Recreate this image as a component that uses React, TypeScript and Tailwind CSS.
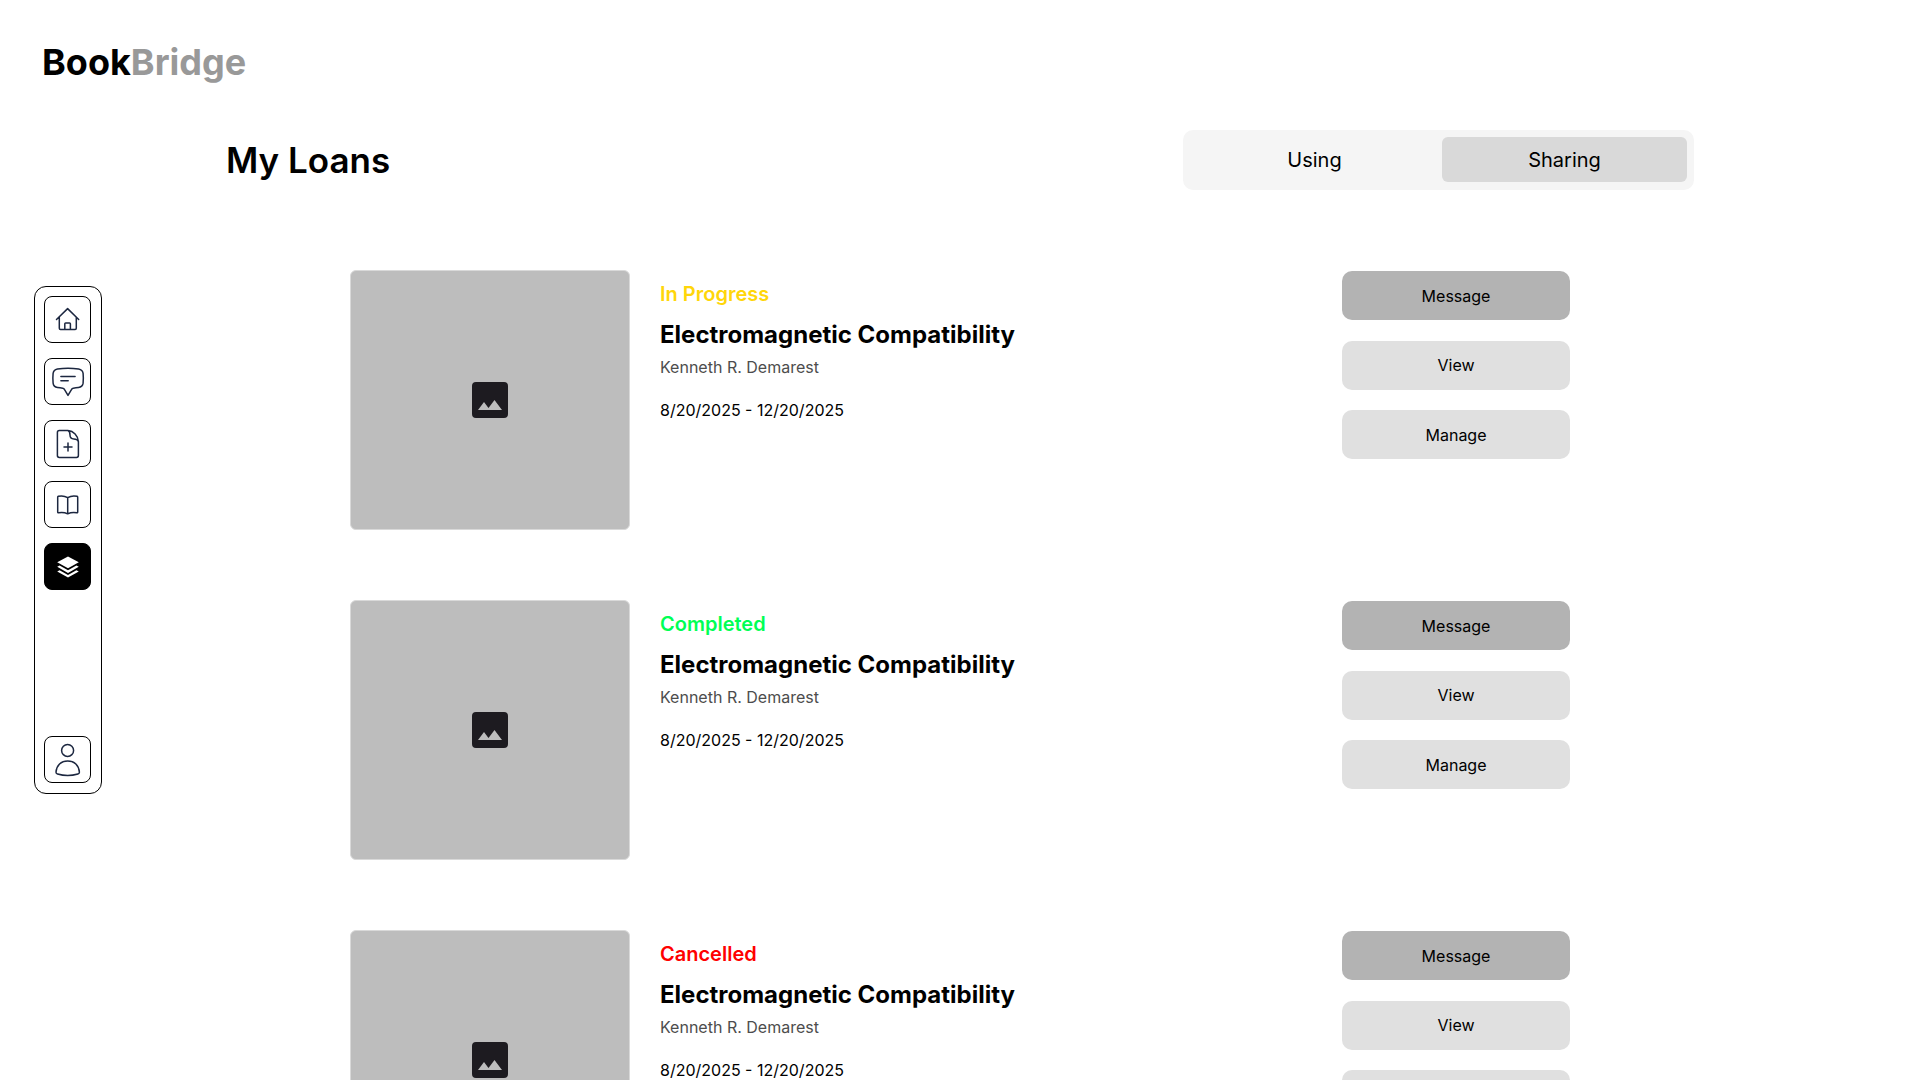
import type { ReactNode } from "react";
import clsx from "clsx";

type Loan = {
  id: number;
  status: "In Progress" | "Completed" | "Cancelled";
  title: string;
  author: string;
  period: string;
};

const loans: Loan[] = [
  { id: 1, status: "In Progress", title: "Electromagnetic Compatibility", author: "Kenneth R. Demarest", period: "8/20/2025 - 12/20/2025" },
  { id: 2, status: "Completed", title: "Electromagnetic Compatibility", author: "Kenneth R. Demarest", period: "8/20/2025 - 12/20/2025" },
  { id: 3, status: "Cancelled", title: "Electromagnetic Compatibility", author: "Kenneth R. Demarest", period: "8/20/2025 - 12/20/2025" },
];

const statusColor: Record<Loan["status"], string> = {
  "In Progress": "text-[#ffd60a]",
  Completed: "text-[#00ff55]",
  Cancelled: "text-[#ff0000]",
};

function Glyph({ children }: { children: ReactNode }) {
  return (
    <svg
      viewBox="1 1 45 45"
      className="size-full"
      fill="none"
      stroke="currentColor"
      strokeWidth="1.5"
      strokeLinecap="round"
      strokeLinejoin="round"
      aria-hidden="true"
    >
      {children}
    </svg>
  );
}

const navItems = [
  {
    label: "Home",
    icon: (
      <Glyph>
        <path d="M12.5 23.5 23.6 12.6 34.7 23.5M15.3 21v11.2q0 1.2 1.2 1.2h14.6q1.2 0 1.2-1.2V21M20.8 33.2v-5.4q0-.9.9-.9h3.8q.9 0 .9.9v5.4" />
      </Glyph>
    ),
  },
  {
    label: "Messages",
    icon: (
      <Glyph>
        <path d="M13.4 11q10.6-1.7 21.2 0c2.6.5 4.2 2 4.5 4.4q.5 5 0 9.8c-.4 2.6-2 4-4.6 4.4q-2.6.4-5.2.6-1.2.2-1.7 1.2L24 37.4l-3.6-6q-.5-1-1.700-1.200-2.600-.2-5.200-.6C10.900 29.200 9.400 27.800 9.100 25.200q-.5-4.800 0-9.800C9.400 13 11 11.500 13.400 11ZM16.900 18.400h14.200M16.900 22.800h7.300" />
      </Glyph>
    ),
  },
  {
    label: "Add book",
    icon: (
      <Glyph>
        <path d="M24 10.500h-8.700q-1.900 0-1.900 1.900v23.200q0 1.900 1.900 1.900h17.200q1.900 0 1.900-1.900V21.500C34 15.500 29.500 11 24 10.500ZM24 10.500c1.600.8 2 2.500 2 4.500 0 2.900 1 3.900 3.800 3.900 2.400 0 4 .8 4.600 2.600M24 23v8M20 27h8" />
      </Glyph>
    ),
  },
  {
    label: "Library",
    icon: (
      <Glyph>
        <path d="M23.700 16.700q-4-2.500-9.300-1.400-.7.200-.7.900V31q0 .9.900.7 5.100-.9 9.100 1.100 4-2 9.100-1.100.9.200.9-.7V16.200q0-.7-.7-.9-5.300-1.100-9.300 1.400ZM23.700 16.700v16" />
      </Glyph>
    ),
  },
  {
    label: "My loans",
    active: true,
    icon: (
      <Glyph>
        <g fill="currentColor" stroke="none">
          <path d="M24 13.600 34.800 19.300 24 25.200 13.200 19.300Z" />
          <path d="M13.200 23.800 15.600 22.600 24 27.200 32.400 22.600 34.800 23.800 24 29.900Z" />
          <path d="M13.200 28.500 15.600 27.300 24 31.900 32.400 27.300 34.800 28.500 24 34.600Z" />
        </g>
      </Glyph>
    ),
  },
];

function NavButton({ label, active, children }: { label: string; active?: boolean; children: ReactNode }) {
  return (
    <button
      type="button"
      aria-label={label}
      aria-current={active ? "page" : undefined}
      className={clsx(
        "size-[47px] rounded-lg border border-black",
        active ? "bg-black text-white" : "bg-white text-[#1c2740]",
      )}
    >
      {children}
    </button>
  );
}

function Sidebar() {
  return (
    <nav aria-label="Main" className="mt-[156px] ml-[34px] flex h-[508px] shrink-0 flex-col justify-between rounded-xl border border-black pt-[9px] pr-[10px] pb-[10px] pl-[9px]">
      <div className="flex h-[294px] flex-col justify-between">
        {navItems.map((item) => (
          <NavButton key={item.label} label={item.label} active={item.active}>
            {item.icon}
          </NavButton>
        ))}
      </div>
      <NavButton label="Profile">
        <Glyph>
          <circle cx="23.6" cy="14.4" r="6" />
          <path d="M12 36.200C12.500 29.300 17 25 23.700 25s11.200 4.300 11.700 11.200c0 1-.5 1.500-1.500 1.800q-10.200 3-20.400 0c-1-.3-1.500-.8-1.500-1.800Z" />
        </Glyph>
      </NavButton>
    </nav>
  );
}

function LoanCard({ loan }: { loan: Loan }) {
  return (
    <li className="flex items-start">
      <div className="flex h-[260px] w-[280px] shrink-0 items-center justify-center rounded-md border border-[#d9d9d9] bg-[#bdbdbd]">
        <svg viewBox="0 0 24 24" className="size-12" fill="#1d1b20" role="img" aria-label="Book cover">
          <path
            fillRule="evenodd"
            d="M5 3h14a2 2 0 0 1 2 2v14a2 2 0 0 1-2 2H5a2 2 0 0 1-2-2V5a2 2 0 0 1 2-2Zm1 14h12l-3.750-5-3 4L9 13l-3 4Z"
          />
        </svg>
      </div>
      <div className="ml-[30px] min-w-0 flex-1 pt-3">
        <p className={clsx("text-xl leading-6 font-semibold", statusColor[loan.status])}>{loan.status}</p>
        <h2 className="mt-[15px] text-2xl leading-7 font-bold">{loan.title}</h2>
        <p className="mt-[6px] text-base leading-6 text-[#4d4d4d]">{loan.author}</p>
        <p className="mt-[19px] text-base leading-6">{loan.period}</p>
      </div>
      <div className="mt-px flex h-[188px] w-[228px] shrink-0 flex-col justify-between">
        <button type="button" className="h-[49px] rounded-[10px] bg-[#b3b3b3]">Message</button>
        <button type="button" className="h-[49px] rounded-[10px] bg-[#e0e0e0]">View</button>
        <button type="button" className="h-[49px] rounded-[10px] bg-[#e0e0e0]">Manage</button>
      </div>
    </li>
  );
}

export default function App() {
  return (
    <div className="flex h-screen flex-col overflow-hidden bg-white font-['Inter',sans-serif] text-black">
      <header className="px-[42px] pt-10 pb-[46px]">
        <a href="#" className="text-4xl leading-[44px] font-bold">
          Book<span className="text-[#999999]">Bridge</span>
        </a>
      </header>
      <div className="flex min-h-0 flex-1 items-start">
        <Sidebar />
        <main className="h-full min-w-0 flex-1 overflow-y-auto pr-[226px] pl-[124px] [scrollbar-width:none]">
          <div className="flex items-center justify-between">
            <h1 className="text-[35px] leading-[44px] font-semibold">My Loans</h1>
            <div role="tablist" aria-label="Loan type" className="flex h-[60px] w-[511px] items-start justify-between rounded-[10px] bg-[#f5f5f5] p-[7px] text-xl">
              <button type="button" role="tab" aria-selected="false" className="h-[45px] w-[249px] rounded-md">Using</button>
              <button type="button" role="tab" aria-selected="true" className="h-[45px] w-[245px] rounded-md bg-[#d9d9d9]">Sharing</button>
            </div>
          </div>
          <ul className="mt-20 flex flex-col gap-[70px] px-[124px]">
            {loans.map((loan) => (
              <LoanCard key={loan.id} loan={loan} />
            ))}
          </ul>
        </main>
      </div>
    </div>
  );
}
